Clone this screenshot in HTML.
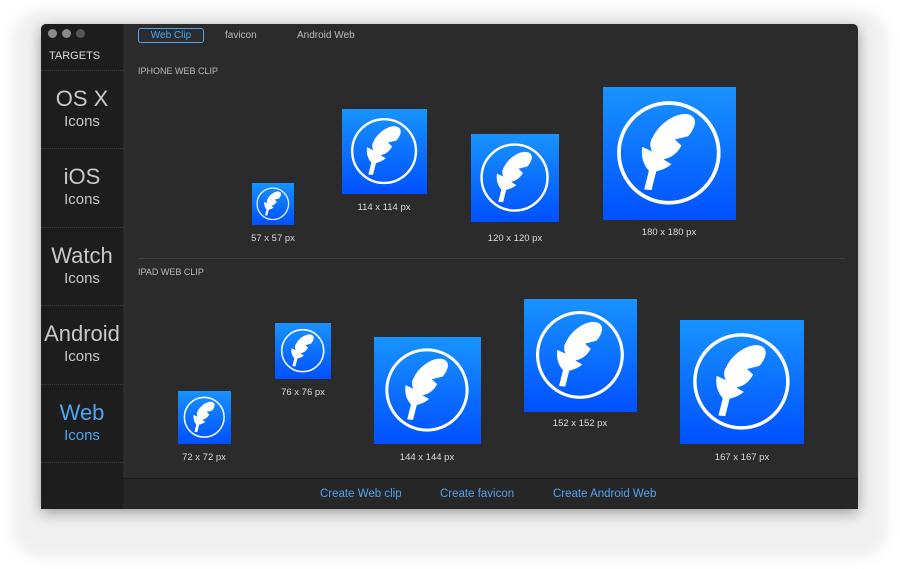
<!DOCTYPE html>
<html><head><meta charset="utf-8"><style>
*{margin:0;padding:0;box-sizing:border-box}
body{width:900px;height:569px;background:#fff;font-family:"Liberation Sans",sans-serif;position:relative;overflow:hidden}
#bgsh{position:absolute;left:12px;top:10px;width:876px;height:548px;border-radius:30px;background:#f0f0f0;filter:blur(6px)}
#win{position:absolute;left:41px;top:24px;width:817px;height:485px;background:#2b2b2b;border-radius:5px 5px 0 0;overflow:hidden;box-shadow:0 4px 14px rgba(0,0,0,.35)}
#side{position:absolute;left:0;top:0;width:82px;height:485px;background:#1d1d1d}
.dot{position:absolute;top:5px;width:9px;height:9px;border-radius:50%;background:#8a8a8a}
.tg{position:absolute;left:8px;top:26px;color:#ddd;font-size:11px}
.it{position:absolute;left:0;width:82px;height:79px;border-top:1px dotted #3a3a3a;text-align:center;color:#c8c8c8}
.it b{display:block;font-weight:normal;font-size:22px;margin-top:15px;line-height:26px}
.it i{display:block;font-style:normal;font-size:15px;line-height:20px}
.tab{position:absolute;top:6px;font-size:10px;color:#bbb}
.sec{position:absolute;left:97px;font-size:9px;color:#bbb}
.ic{position:absolute;background:linear-gradient(#1893ff,#0050ff)}
.ic svg{width:100%;height:100%;display:block}
.lb{position:absolute;font-size:9.5px;color:#ddd;text-align:center;width:120px}
#bot{position:absolute;left:82px;top:454px;width:735px;height:31px;background:#262626;border-top:1px solid #1a1a1a}
.bl{position:absolute;top:9px;font-size:11.5px;color:#4fa3f0}
</style></head><body>
<div id="bgsh"></div>
<svg width="0" height="0" style="position:absolute"><defs><g id="f"><circle cx="49.5" cy="49.5" r="37.5" fill="none" stroke="#fff" stroke-width="2.8"/><path fill="#fff" d="M31 77 L34.5 63 C30 58 28.5 52 29.5 45 L37 48.5 C35 45 35 41 37.5 37.5 C41 30 50 22 59 20.5 C65 19.5 70 22 69 28 C68 32 66 35 64 37 L54 39.5 L59 44 C57 48 54 51 50 53 L45.5 54.5 L51.5 58 C48 61 44 62.5 40 63.5 L36.5 77.5 Z"/></g></defs></svg>
<div id="win">
<div id="side">
<div class="dot" style="left:7px"></div><div class="dot" style="left:21px"></div><div class="dot" style="left:35px;background:#555"></div>
<div class="tg">TARGETS</div>
<div class="it" style="top:46px"><b>OS X</b><i>Icons</i></div>
<div class="it" style="top:124px"><b>iOS</b><i>Icons</i></div>
<div class="it" style="top:203px"><b>Watch</b><i>Icons</i></div>
<div class="it" style="top:281px"><b>Android</b><i>Icons</i></div>
<div class="it" style="top:360px;color:#4fa3f0"><b>Web</b><i>Icons</i></div>
<div class="it" style="top:438px"></div>
</div>
<div class="tab" style="left:97px;top:4px;width:66px;height:15px;border:1px solid #4fa3f0;border-radius:3px;color:#4fa3f0;text-align:center;line-height:13px">Web Clip</div>
<div class="tab" style="left:184px">favicon</div>
<div class="tab" style="left:256px">Android Web</div>
<div class="sec" style="top:42px">IPHONE WEB CLIP</div>
<div class="sec" style="top:243px">IPAD WEB CLIP</div>
<div style="position:absolute;left:97px;top:234px;width:707px;height:1px;background:#3d3d3d"></div>

<div class="ic" style="left:211px;top:159px;width:42px;height:42px"><svg viewBox="0 0 100 100"><use href="#f"/></svg></div>
<div class="lb" style="left:172px;top:209px">57 x 57 px</div>
<div class="ic" style="left:301px;top:85px;width:85px;height:85px"><svg viewBox="0 0 100 100"><use href="#f"/></svg></div>
<div class="lb" style="left:283px;top:178px">114 x 114 px</div>
<div class="ic" style="left:430px;top:110px;width:88px;height:88px"><svg viewBox="0 0 100 100"><use href="#f"/></svg></div>
<div class="lb" style="left:414px;top:209px">120 x 120 px</div>
<div class="ic" style="left:562px;top:63px;width:133px;height:133px"><svg viewBox="0 0 100 100"><use href="#f"/></svg></div>
<div class="lb" style="left:568px;top:203px">180 x 180 px</div>

<div class="ic" style="left:137px;top:367px;width:53px;height:53px"><svg viewBox="0 0 100 100"><use href="#f"/></svg></div>
<div class="lb" style="left:103px;top:428px">72 x 72 px</div>
<div class="ic" style="left:234px;top:299px;width:56px;height:56px"><svg viewBox="0 0 100 100"><use href="#f"/></svg></div>
<div class="lb" style="left:202px;top:363px">76 x 76 px</div>
<div class="ic" style="left:333px;top:313px;width:107px;height:107px"><svg viewBox="0 0 100 100"><use href="#f"/></svg></div>
<div class="lb" style="left:326px;top:428px">144 x 144 px</div>
<div class="ic" style="left:483px;top:275px;width:113px;height:113px"><svg viewBox="0 0 100 100"><use href="#f"/></svg></div>
<div class="lb" style="left:479px;top:394px">152 x 152 px</div>
<div class="ic" style="left:639px;top:296px;width:124px;height:124px"><svg viewBox="0 0 100 100"><use href="#f"/></svg></div>
<div class="lb" style="left:641px;top:428px">167 x 167 px</div>

<div id="bot">
<div class="bl" style="left:197px">Create Web clip</div>
<div class="bl" style="left:317px">Create favicon</div>
<div class="bl" style="left:430px">Create Android Web</div>
</div>
</div>
</body></html>
